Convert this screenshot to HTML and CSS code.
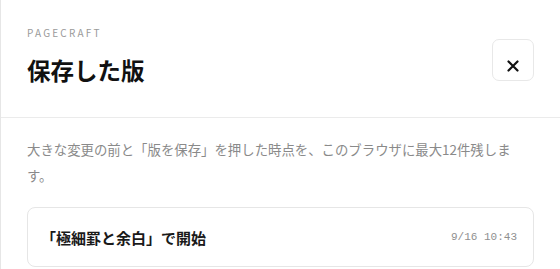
FILE: index.html
```html
<!DOCTYPE html>
<html lang="ja">
<head>
  <meta charset="UTF-8">
  <title>保存した版</title>
  <link rel="stylesheet" href="styles.css">
</head>
<body>

<aside class="panel">
  <header class="head">
    <div>
      <p class="eyebrow">PAGECRAFT</p>
      <h1 class="title">保存した版</h1>
    </div>
    <button class="close" aria-label="閉じる">
      <svg width="12" height="12" viewBox="0 0 12 12">
        <path d="M1.5 1.5 L10.5 10.5 M10.5 1.5 L1.5 10.5" stroke="#111" stroke-width="2.2" stroke-linecap="round"/>
      </svg>
    </button>
  </header>

  <div class="body">
    <p class="desc">大きな変更の前と「版を保存」を押した時点を、このブラウザに最大12件残します。</p>

    <div class="version">
      <span class="version-name">「極細罫と余白」で開始</span>
      <span class="version-time">9/16 10:43</span>
    </div>
  </div>
</aside>

</body>
</html>
```

FILE: styles.css
```css
body {
  margin: 0;
  background: #fff;
  font-family: "Noto Sans CJK JP", "Noto Sans", sans-serif;
  color: #111;
}

.panel {
  min-height: 100vh;
  border-left: 1px solid #e6e6e6;
  box-sizing: border-box;
}

.head {
  display: flex;
  justify-content: space-between;
  align-items: flex-start;
  padding: 26px 26px 31px 26px;
  border-bottom: 1px solid #ebebeb;
}

.eyebrow {
  margin: 0 0 14px;
  font-size: 10px;
  line-height: 14px;
  letter-spacing: 0.22em;
  color: #9a9a9a;
}

.title {
  margin: 0;
  font-size: 23.5px;
  line-height: 32px;
  font-weight: 700;
}

.close {
  width: 42px;
  height: 42px;
  margin-top: 13px;
  padding: 14px 0 0;
  border: 1px solid #e8e8e8;
  border-radius: 7px;
  background: #fff;
  cursor: pointer;
}

.body {
  padding: 18px 26px;
}

.desc {
  margin: 0 0 19px;
  font-size: 13.4px;
  line-height: 26px;
  color: #8a8a8a;
}

.version {
  display: flex;
  justify-content: space-between;
  align-items: center;
  height: 60px;
  padding: 0 16px 0 13px;
  border: 1px solid #e6e6e6;
  border-radius: 8px;
  box-sizing: border-box;
}

.version-name {
  font-size: 15px;
  font-weight: 700;
  color: #1a1a1a;
}

.version-time {
  font-family: "Liberation Mono", monospace;
  font-size: 11px;
  color: #8f8f8f;
}
```
